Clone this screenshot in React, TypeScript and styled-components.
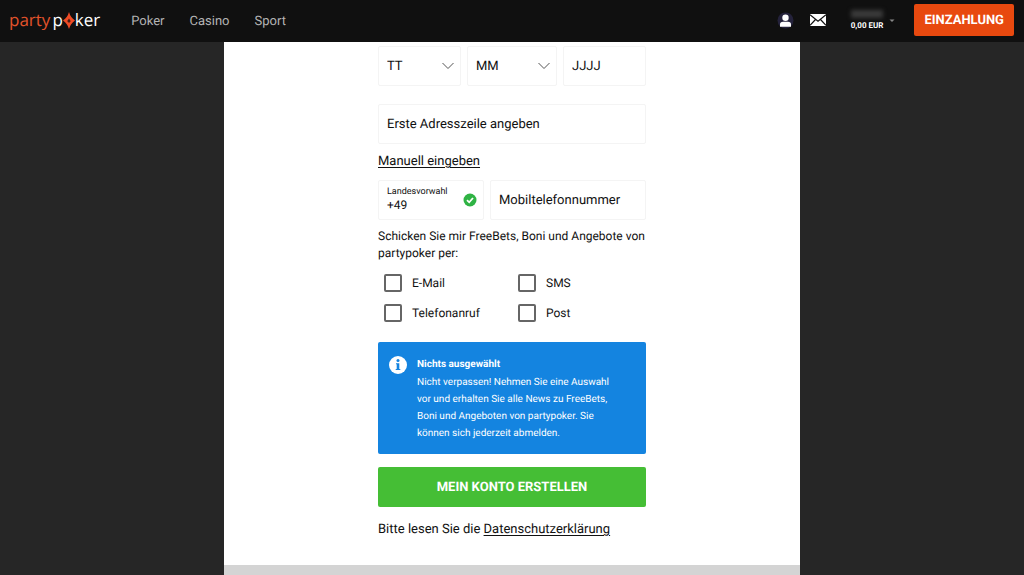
import React from "react";
import styled, { createGlobalStyle } from "styled-components";

const GlobalStyle = createGlobalStyle`
  *, *::before, *::after { box-sizing: border-box; }
  html, body, #root { min-height: 100vh; }
  body {
    margin: 0;
    background: #262626;
    color: #111;
    font-family: Roboto, "Liberation Sans", sans-serif;
    font-size: 12px;
    line-height: 17px;
    text-rendering: geometricPrecision;
  }
  button, input, select { font: inherit; color: inherit; margin: 0; text-rendering: inherit; }
`;

const Page = styled.div`
  display: flex;
  flex-direction: column;
  min-height: 100vh;
`;

const Header = styled.header`
  position: sticky;
  top: 0;
  z-index: 1;
  display: flex;
  align-items: center;
  height: 42px;
  padding: 0 10px 2px 9px;
  background: #101010;
  color: #fff;
`;

const Logo = styled.a`
  display: flex;
  align-items: center;
  height: 36px;
  color: #fff;
  font-family: "Open Sans", sans-serif;
  font-size: 17px;
  line-height: 24px;
  text-decoration: none;
`;

const LogoAccent = styled.span`
  margin-right: 2px;
  color: #e2532b;
`;

const Nav = styled.nav`
  display: flex;
  gap: 25px;
  margin-left: 31px;
  padding-top: 2px;
`;

const NavLink = styled.a`
  color: #b4b4b4;
  font-size: 13px;
  text-decoration: none;
`;

const Account = styled.div`
  display: flex;
  align-items: center;
  margin-left: auto;
`;

const IconButton = styled.button`
  display: flex;
  margin-right: 16px;
  padding: 0;
  border: 0;
  background: none;
`;

const Balance = styled.button`
  display: grid;
  grid-template-columns: auto 6px;
  align-items: center;
  column-gap: 6px;
  margin: 0 19px 0 9px;
  padding: 2px 0 0;
  border: 0;
  background: none;
  color: #fff;
  font-size: 8px;
  font-weight: 700;
  line-height: 12px;
`;

const MaskedName = styled.span`
  display: block;
  height: 8px;
  margin-bottom: 2px;
  background: #3a3a3a;
  filter: blur(2px);
`;

const Deposit = styled.button`
  height: 32px;
  padding: 0 10px;
  border: 0;
  border-radius: 2px;
  background: #e8490f;
  color: #fff;
  font-size: 13px;
  font-weight: 700;
`;

const Panel = styled.main`
  width: 100%;
  max-width: 576px;
  flex: 1;
  display: flex;
  flex-direction: column;
  margin: 0 auto;
  background: #fff;
`;

const Form = styled.form`
  width: 100%;
  max-width: 268px;
  margin: 0 auto;
  padding: 4px 0 27px;
`;

const FieldRow = styled.div<{ $columns: string }>`
  display: grid;
  grid-template-columns: ${(p) => p.$columns};
  gap: 6px;
`;

const Field = styled.label`
  position: relative;
  display: flex;
  flex-direction: column;
  justify-content: center;
  height: 40px;
  border: 1px solid #f4f4f4;
  border-radius: 2px;
  font-size: 13px;
`;

const Input = styled.input`
  width: 100%;
  height: 38px;
  padding: 0 8px;
  border: 0;
  background: none;
  &::placeholder { color: #111; opacity: 1; }
`;

const Select = styled.select`
  width: 100%;
  height: 38px;
  padding: 0 8px;
  border: 0;
  background: none;
  appearance: none;
`;

const FieldCaption = styled.span`
  padding: 0 8px;
  font-size: 9px;
  line-height: 10px;
`;

const FilledInput = styled(Input)`
  height: 16px;
  font-size: 12px;
`;

const FieldIcon = styled.span`
  position: absolute;
  right: 6px;
  top: 0;
  bottom: 0;
  display: flex;
  align-items: center;
  pointer-events: none;
`;

const AddressField = styled.div`
  margin: 18px 0 9px;
`;

const TextLink = styled.a`
  color: inherit;
  font-size: 13px;
  text-decoration: underline;
  text-underline-offset: 2px;
`;

const PhoneRow = styled(FieldRow)`
  margin: 10px 0 8px;
`;

const Consent = styled.fieldset`
  min-width: 0;
  margin: 0;
  padding: 0;
  border: 0;
`;

const Legend = styled.legend`
  padding: 0;
`;

const Options = styled.div`
  display: grid;
  grid-template-columns: 1fr 1fr;
  row-gap: 12px;
  padding: 12px 0 0 6px;
  margin-right: -6px;
`;

const Option = styled.label`
  display: flex;
  align-items: center;
  gap: 10px;
  height: 18px;
`;

const Checkbox = styled.input`
  appearance: none;
  width: 18px;
  height: 18px;
  border: 2px solid #666;
  border-radius: 2px;
  background: #fff;
  &:checked { background: #45be35; }
`;

const Notice = styled.section`
  display: flex;
  align-items: flex-start;
  gap: 9px;
  margin: 20px 0 13px;
  padding: 13px 26px 12px 10px;
  border-radius: 2px;
  background: #1484e0;
  color: #fff;
  font-size: 10px;
`;

const NoticeBody = styled.div`
  padding-top: 1px;
`;

const NoticeTitle = styled.h2`
  margin: 0;
  font-size: 10px;
  font-weight: 700;
  line-height: 18px;
`;

const NoticeText = styled.p`
  margin: 0;
`;

const Submit = styled.button`
  width: 100%;
  height: 40px;
  border: 0;
  border-radius: 2px;
  background: #45be35;
  color: #fff;
  font-size: 13px;
  font-weight: 700;
`;

const Privacy = styled.p`
  margin: 14px 0 0;
  font-size: 13px;
`;

const Footer = styled.footer`
  flex: 1;
  min-height: 10px;
  background: #d4d4d4;
`;

const Chevron = () => (
  <FieldIcon>
    <svg width="12" height="8" viewBox="0 0 12 8" fill="none" stroke="#555" aria-hidden="true">
      <path d="M.5 1 6 6.5 11.5 1" />
    </svg>
  </FieldIcon>
);

const InfoIcon = styled.svg`
  flex-shrink: 0;
`;

const channels = ["E-Mail", "SMS", "Telefonanruf", "Post"];

export default function App() {
  return (
    <Page>
      <GlobalStyle />
      <Header>
        <Logo href="#" aria-label="partypoker">
          <LogoAccent>party</LogoAccent>p
          <svg width="12" height="18" viewBox="0 0 12 18" aria-hidden="true">
            <path d="M6 1Q7.5 6.500 12 9.500Q7.500 12.500 6 18Q4.500 12.500 0 9.500Q4.500 6.500 6 1Z" fill="#ee4b25" />
            <path d="M6 7.500C5.500 8.700 4.400 9.200 4.400 10.200C4.400 11 5.400 11.200 5.800 10.700L5.400 12H6.600L6.200 10.700C6.600 11.200 7.600 11 7.600 10.200C7.600 9.200 6.500 8.700 6 7.500Z" fill="#451b13" />
          </svg>
          ker
        </Logo>
        <Nav>
          <NavLink href="#">Poker</NavLink>
          <NavLink href="#">Casino</NavLink>
          <NavLink href="#">Sport</NavLink>
        </Nav>
        <Account>
          <IconButton type="button" aria-label="Profil">
            <svg width="17" height="17" viewBox="0 0 17 17">
              <circle cx="8.500" cy="8.500" r="8" fill="#24223b" />
              <circle cx="8.500" cy="5.700" r="3.200" fill="#fff" />
              <path d="M3 14.800V12.500Q3 9.700 6 9.700H11Q14 9.700 14 12.500V14.800Z" fill="#fff" />
            </svg>
          </IconButton>
          <IconButton type="button" aria-label="Nachrichten">
            <svg width="16" height="12" viewBox="0 0 16 12">
              <path d="M0 0H16V12H0Z" fill="#fff" />
              <path d="M0 .8 8 7.300 16 .8M0 11.300 5.500 5.500M16 11.300 10.500 5.500" fill="none" stroke="#101010" strokeWidth="1.200" />
            </svg>
          </IconButton>
          <Balance type="button">
            <span>
              <MaskedName />
              0,00 EUR
            </span>
            <svg width="6" height="4" viewBox="0 0 6 4" aria-hidden="true">
              <path d="M.5 .5H5.500L3 3Z" fill="#888" />
            </svg>
          </Balance>
          <Deposit type="button">EINZAHLUNG</Deposit>
        </Account>
      </Header>
      <Panel>
        <Form>
          <FieldRow $columns="83fr 90fr 83fr">
            <Field>
              <Select aria-label="Tag"><option>TT</option></Select>
              <Chevron />
            </Field>
            <Field>
              <Select aria-label="Monat"><option>MM</option></Select>
              <Chevron />
            </Field>
            <Field>
              <Input aria-label="Jahr" placeholder="JJJJ" />
            </Field>
          </FieldRow>
          <AddressField>
            <Field>
              <Input aria-label="Adresse" placeholder="Erste Adresszeile angeben" />
            </Field>
          </AddressField>
          <TextLink href="#">Manuell eingeben</TextLink>
          <PhoneRow $columns="106fr 156fr">
            <Field>
              <FieldCaption>Landesvorwahl</FieldCaption>
              <FilledInput defaultValue="+49" />
              <FieldIcon>
                <svg width="14" height="14" viewBox="0 0 14 14" aria-hidden="true">
                  <circle cx="7" cy="7" r="6.500" fill="#2fb344" />
                  <path d="M4 7.200 6.200 9.300 10 5" fill="none" stroke="#fff" strokeWidth="1.800" />
                </svg>
              </FieldIcon>
            </Field>
            <Field>
              <Input aria-label="Mobiltelefonnummer" placeholder="Mobiltelefonnummer" />
            </Field>
          </PhoneRow>
          <Consent>
            <Legend>Schicken Sie mir FreeBets, Boni und Angebote von partypoker per:</Legend>
            <Options>
              {channels.map((channel) => (
                <Option key={channel}>
                  <Checkbox type="checkbox" />
                  {channel}
                </Option>
              ))}
            </Options>
          </Consent>
          <Notice>
            <InfoIcon width="20" height="20" viewBox="0 0 20 20" aria-hidden="true">
              <circle cx="10" cy="10" r="9" fill="#fff" />
              <circle cx="10" cy="5.500" r="1.500" fill="#1484e0" />
              <path d="M8 8.200H11.300V14H12.300V15H7.700V14H8.700V9.200H8Z" fill="#1484e0" />
            </InfoIcon>
            <NoticeBody>
              <NoticeTitle>Nichts ausgewählt</NoticeTitle>
              <NoticeText>
                Nicht verpassen! Nehmen Sie eine Auswahl vor und erhalten Sie alle News zu FreeBets,
                Boni und Angeboten von partypoker. Sie können sich jederzeit abmelden.
              </NoticeText>
            </NoticeBody>
          </Notice>
          <Submit type="button">MEIN KONTO ERSTELLEN</Submit>
          <Privacy>
            Bitte lesen Sie die <TextLink href="#">Datenschutzerklärung</TextLink>
          </Privacy>
        </Form>
        <Footer />
      </Panel>
    </Page>
  );
}
